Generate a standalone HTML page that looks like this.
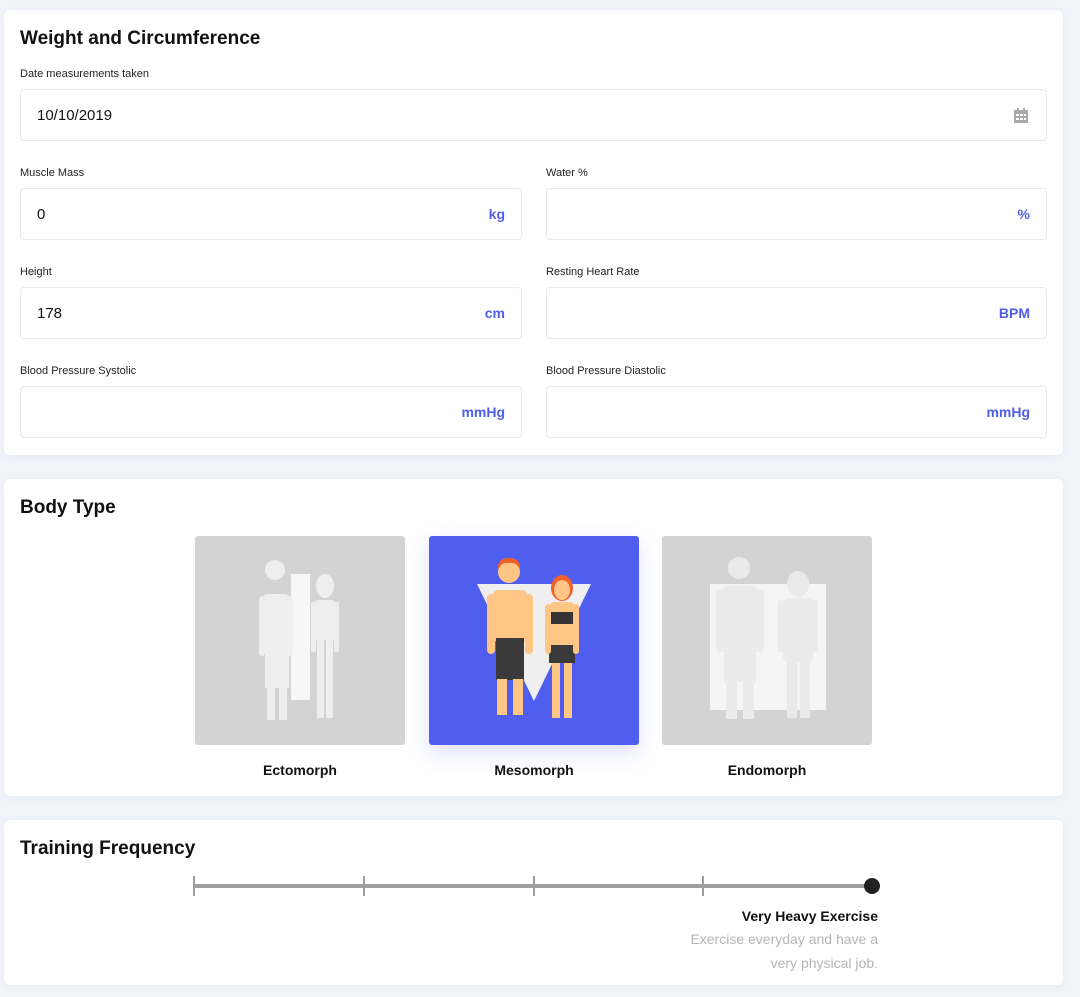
<!DOCTYPE html>
<html><head><meta charset="utf-8"><style>
*{box-sizing:border-box;margin:0;padding:0}
body{width:1080px;height:997px;background:#f1f3fa;font-family:"Liberation Sans",sans-serif;position:relative;overflow:hidden;color:#111}
.card{position:absolute;left:4px;width:1059px;background:#fff;border-radius:6px;box-shadow:0 2px 8px rgba(80,90,160,.06)}
h2{position:absolute;left:16px;font-size:19px;font-weight:bold;color:#111}
.lbl{position:absolute;font-size:11px;color:#222}
.in{position:absolute;height:52px;border:1px solid #e8e8ee;border-radius:4px;background:#fff}
.in .v{position:absolute;left:16px;top:17px;font-size:15px;color:#111}
.in .u{position:absolute;right:16px;top:17px;font-size:14px;color:#4f5ee9;font-weight:bold}
.bt{position:absolute;top:57px;width:210px;height:209px;border-radius:3px;background:#d3d3d3}
.btl{position:absolute;top:283px;width:210px;text-align:center;font-size:14px;font-weight:bold;color:#111}
</style></head><body>
<div class="card" style="top:10px;height:445px">
<h2 style="top:18px">Weight and Circumference</h2>
<div class="lbl" style="left:16px;top:58px">Date measurements taken</div>
<div class="in" style="left:16px;top:79px;width:1027px"><span class="v">10/10/2019</span>
<svg style="position:absolute;right:18px;top:18px" width="14" height="15" viewBox="0 0 14 15"><rect x="0" y="2" width="14" height="13" fill="#a9a9a9"/><rect x="3" y="0" width="2" height="4" fill="#a9a9a9"/><rect x="9" y="0" width="2" height="4" fill="#a9a9a9"/><g fill="#fff"><rect x="2" y="6" width="3" height="2"/><rect x="6" y="6" width="3" height="2"/><rect x="10" y="6" width="2" height="2"/><rect x="2" y="10" width="3" height="2"/><rect x="6" y="10" width="3" height="2"/><rect x="10" y="10" width="2" height="2"/></g></svg></div>
<div class="lbl" style="left:16px;top:157px">Muscle Mass</div>
<div class="lbl" style="left:542px;top:157px">Water %</div>
<div class="in" style="left:16px;top:178px;width:502px"><span class="v">0</span><span class="u">kg</span></div>
<div class="in" style="left:542px;top:178px;width:501px"><span class="u">%</span></div>
<div class="lbl" style="left:16px;top:256px">Height</div>
<div class="lbl" style="left:542px;top:256px">Resting Heart Rate</div>
<div class="in" style="left:16px;top:277px;width:502px"><span class="v">178</span><span class="u">cm</span></div>
<div class="in" style="left:542px;top:277px;width:501px"><span class="u">BPM</span></div>
<div class="lbl" style="left:16px;top:355px">Blood Pressure Systolic</div>
<div class="lbl" style="left:542px;top:355px">Blood Pressure Diastolic</div>
<div class="in" style="left:16px;top:376px;width:502px"><span class="u">mmHg</span></div>
<div class="in" style="left:542px;top:376px;width:501px"><span class="u">mmHg</span></div>
</div>

<div class="card" style="top:479px;height:317px">
<h2 style="top:18px">Body Type</h2>
<div class="bt" style="left:191px">
<svg width="210" height="209"><rect x="96" y="38" width="19" height="126" fill="#f7f7f7"/>
<g fill="#eeeeee"><circle cx="80" cy="34" r="10"/><rect x="68" y="58" width="26" height="40" rx="4"/><rect x="64" y="60" width="6" height="60" rx="3"/><rect x="92" y="60" width="6" height="60" rx="3"/><rect x="70" y="98" width="24" height="54"/><rect x="72" y="150" width="8" height="34"/><rect x="84" y="150" width="8" height="34"/>
<ellipse cx="130" cy="50" rx="9" ry="12"/><rect x="120" y="64" width="20" height="40" rx="3"/><rect x="116" y="66" width="5" height="50" rx="2"/><rect x="139" y="66" width="5" height="50" rx="2"/><rect x="122" y="104" width="7" height="78"/><rect x="131" y="104" width="7" height="78"/></g></svg></div>
<div class="bt" style="left:425px;background:#4f5eee;box-shadow:0 8px 22px rgba(79,94,238,.18)">
<svg width="210" height="209"><polygon points="48,48 162,48 105,165" fill="#efefef"/>
<circle cx="80" cy="36" r="11" fill="#ffc585"/><path d="M69 34 Q68 22 80 22 Q92 22 91 34 Q88 26 80 27 Q72 26 69 34Z" fill="#f0602a"/>
<rect x="64" y="54" width="34" height="52" rx="5" fill="#ffc585"/><rect x="58" y="58" width="8" height="60" rx="4" fill="#ffc585"/><rect x="96" y="58" width="8" height="60" rx="4" fill="#ffc585"/>
<rect x="67" y="102" width="28" height="42" fill="#3a3a3a"/><rect x="68" y="143" width="10" height="36" fill="#ffc585"/><rect x="84" y="143" width="10" height="36" fill="#ffc585"/>
<ellipse cx="133" cy="52" rx="11" ry="13" fill="#f0602a"/><ellipse cx="133" cy="54" rx="8" ry="10" fill="#ffc585"/>
<rect x="121" y="66" width="24" height="54" rx="4" fill="#ffc585"/><rect x="122" y="76" width="22" height="12" fill="#333"/><rect x="120" y="109" width="26" height="18" fill="#3a3a3a"/>
<rect x="116" y="68" width="6" height="50" rx="3" fill="#ffc585"/><rect x="144" y="68" width="6" height="50" rx="3" fill="#ffc585"/>
<rect x="123" y="127" width="8" height="55" fill="#ffc585"/><rect x="135" y="127" width="8" height="55" fill="#ffc585"/></svg></div>
<div class="bt" style="left:658px">
<svg width="210" height="209"><rect x="48" y="48" width="116" height="126" fill="#f5f5f5"/>
<g fill="#eaeaea"><circle cx="77" cy="32" r="11"/><rect x="60" y="50" width="36" height="54" rx="6"/><rect x="54" y="54" width="9" height="62" rx="4"/><rect x="93" y="54" width="9" height="62" rx="4"/><rect x="62" y="102" width="32" height="44"/><rect x="64" y="145" width="11" height="38"/><rect x="81" y="145" width="11" height="38"/>
<ellipse cx="136" cy="48" rx="11" ry="13"/><rect x="121" y="62" width="30" height="64" rx="5"/><rect x="116" y="64" width="7" height="52" rx="3"/><rect x="149" y="64" width="7" height="52" rx="3"/><rect x="125" y="124" width="10" height="58"/><rect x="138" y="124" width="10" height="58"/></g></svg></div>
<div class="btl" style="left:191px">Ectomorph</div>
<div class="btl" style="left:425px">Mesomorph</div>
<div class="btl" style="left:658px">Endomorph</div>
</div>

<div class="card" style="top:820px;height:165px">
<h2 style="top:18px">Training Frequency</h2>
<div style="position:absolute;left:190px;top:64px;width:678px;height:4px;background:#9e9e9e"></div>
<div style="position:absolute;left:189px;top:56px;width:2px;height:20px;background:#9e9e9e"></div>
<div style="position:absolute;left:359px;top:56px;width:2px;height:20px;background:#9e9e9e"></div>
<div style="position:absolute;left:529px;top:56px;width:2px;height:20px;background:#9e9e9e"></div>
<div style="position:absolute;left:698px;top:56px;width:2px;height:20px;background:#9e9e9e"></div>
<div style="position:absolute;left:860px;top:58px;width:16px;height:16px;border-radius:50%;background:#222"></div>
<div style="position:absolute;right:185px;top:88px;text-align:right;font-size:14px;font-weight:bold;color:#111">Very Heavy Exercise</div>
<div style="position:absolute;right:185px;top:107px;text-align:right;font-size:14px;line-height:24px;color:#b5b5b5;width:260px">Exercise everyday and have a<br>very physical job.</div>
</div>
</body></html>
